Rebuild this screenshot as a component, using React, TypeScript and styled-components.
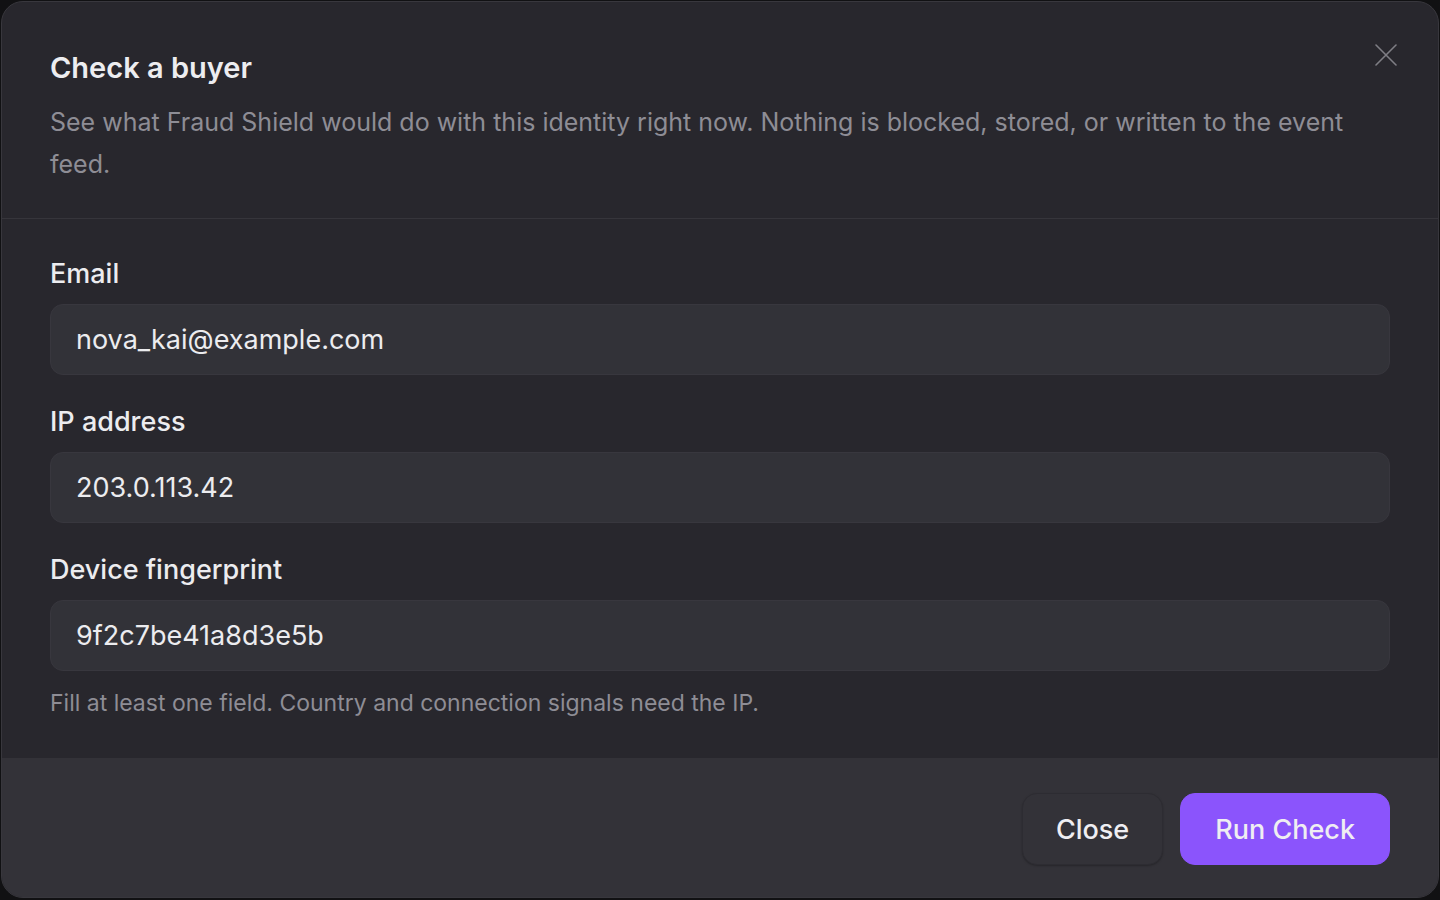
import React from 'react'
import styled, { createGlobalStyle } from 'styled-components'

const GlobalStyle = createGlobalStyle`
  html, body {
    margin: 0;
    padding: 0;
    background: #111113;
    font-family: Inter, "Noto Sans", "Liberation Sans", sans-serif;
  }
  * { box-sizing: border-box; }
`

const Overlay = styled.div`
  width: 100vw;
  height: 100vh;
  padding: 1px 1px 2px 1px;
`

const Modal = styled.div`
  position: relative;
  height: 100%;
  display: flex;
  flex-direction: column;
  background: #28272d;
  border: 1px solid #38373d;
  border-radius: 22px;
  overflow: hidden;
`

const Header = styled.div`
  padding: 48px 50px 33px 48px;
  border-bottom: 1px solid #36353b;
`

const Title = styled.h2`
  margin: 0 0 16px;
  font-size: 29px;
  line-height: 35px;
  font-weight: 600;
  color: #ededf0;
`

const Description = styled.p`
  margin: 0;
  font-size: 25px;
  line-height: 42px;
  color: #8e8d95;
  padding-right: 30px;
`

const CloseIcon = styled.button`
  position: absolute;
  top: 42px;
  right: 41px;
  width: 22px;
  height: 22px;
  padding: 0;
  border: none;
  background: transparent;
  color: #7f7e85;
  display: flex;
  align-items: center;
  justify-content: center;
  cursor: pointer;
`

const Body = styled.div`
  flex: 1;
  padding: 39px 48px 0 48px;
  display: flex;
  flex-direction: column;
`

const Field = styled.div`
  display: flex;
  flex-direction: column;
  gap: 14px;
  margin-bottom: 31px;
  &:last-of-type { margin-bottom: 17px; }
`

const Label = styled.label`
  font-size: 27px;
  line-height: 32px;
  font-weight: 500;
  color: #ececef;
`

const Input = styled.input`
  height: 71px;
  width: 100%;
  padding: 0 25px;
  border-radius: 13px;
  border: 1px solid #38373e;
  background: #323238;
  color: #ececef;
  font-family: inherit;
  font-size: 27px;
  outline: none;
`

const Hint = styled.p`
  margin: 0;
  font-size: 23px;
  line-height: 30px;
  color: #8e8d95;
`

const Footer = styled.div`
  display: flex;
  justify-content: flex-end;
  align-items: center;
  gap: 17px;
  padding: 35px 48px 32px;
  background: #333238;
`

const Button = styled.button<{ $primary?: boolean }>`
  height: 72px;
  padding: 0 ${p => (p.$primary ? '34px' : '33px')};
  border-radius: 15px;
  font-family: inherit;
  font-size: 27px;
  font-weight: 500;
  cursor: pointer;
  color: #efeef2;
  border: 1px solid ${p => (p.$primary ? '#8b54fc' : '#2d2c32')};
  background: ${p => (p.$primary ? '#8b54fc' : '#333238')};
  box-shadow: ${p => (p.$primary ? 'none' : '0 1px 2px rgba(0,0,0,0.25)')};
`

const fields = [
  { label: 'Email', value: 'nova_kai@example.com' },
  { label: 'IP address', value: '203.0.113.42' },
  { label: 'Device fingerprint', value: '9f2c7be41a8d3e5b' },
]

export default function App() {
  return (
    <>
      <GlobalStyle />
      <Overlay>
        <Modal>
          <Header>
            <Title>Check a buyer</Title>
            <Description>
              See what Fraud Shield would do with this identity right now. Nothing is blocked, stored, or written to the event feed.
            </Description>
          </Header>
          <CloseIcon aria-label="Close">
            <svg width="22" height="22" viewBox="0 0 22 22" fill="none" stroke="currentColor" strokeWidth="1.6" strokeLinecap="round">
              <path d="M1 1L21 21M21 1L1 21" />
            </svg>
          </CloseIcon>
          <Body>
            {fields.map(f => (
              <Field key={f.label}>
                <Label>{f.label}</Label>
                <Input defaultValue={f.value} />
              </Field>
            ))}
            <Hint>Fill at least one field. Country and connection signals need the IP.</Hint>
          </Body>
          <Footer>
            <Button>Close</Button>
            <Button $primary>Run Check</Button>
          </Footer>
        </Modal>
      </Overlay>
    </>
  )
}
